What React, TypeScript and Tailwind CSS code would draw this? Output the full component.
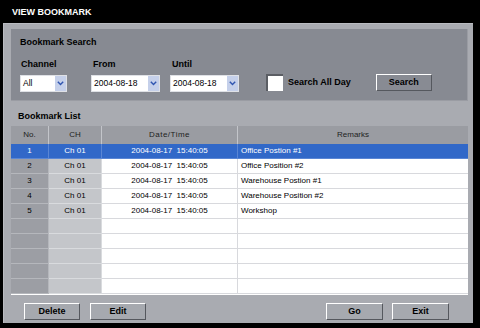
import React from "react";

const rows = [
  { no: "1", ch: "Ch 01", dt: "2004-08-17  15:40:05", rm: "Office Postion #1" },
  { no: "2", ch: "Ch 01", dt: "2004-08-17  15:40:05", rm: "Office Position #2" },
  { no: "3", ch: "Ch 01", dt: "2004-08-17  15:40:05", rm: "Warehouse Postion #1" },
  { no: "4", ch: "Ch 01", dt: "2004-08-17  15:40:05", rm: "Warehouse Position #2" },
  { no: "5", ch: "Ch 01", dt: "2004-08-17  15:40:05", rm: "Workshop" },
];

const empty = Array.from({ length: 5 });

function Select({ value, width }: { value: string; width: string }) {
  return (
    <div className={`${width} h-[17px] bg-white border border-[#dfe1e6] flex items-center justify-between`}>
      <span className="pl-[2px] text-[8.5px] text-black leading-none">{value}</span>
      <span className="w-[11px] h-[15px] bg-[#c5d0ea] flex items-center justify-center">
        <svg width="7" height="5" viewBox="0 0 7 5">
          <path d="M0.8 0.8 L3.5 3.6 L6.2 0.8" fill="none" stroke="#2f55b0" strokeWidth="1.4" />
        </svg>
      </span>
    </div>
  );
}

function RaisedButton({ label, width, fill }: { label: string; width: string; fill: string }) {
  return (
    <button
      className={`${width} h-[17px] ${fill} border-t border-l border-t-white border-l-white border-b border-r border-b-[#55585e] border-r-[#55585e] text-[9px] font-bold text-black leading-none flex items-center justify-center`}
    >
      {label}
    </button>
  );
}

export default function App() {
  return (
    <div className="w-[480px] h-[328px] bg-black overflow-hidden font-['Liberation_Sans',Arial,sans-serif]">
      <div className="h-[23px] pl-[12px] pt-[2px] flex items-center text-white text-[9px] font-bold">
        VIEW BOOKMARK
      </div>

      <div className="ml-[3px] w-[470px] h-[300px] bg-[#a9abb1] border-t border-l border-[#b9bbc0] pl-[7px] pt-[5px] flex flex-col">
        {/* search box */}
        <div className="w-[457px] h-[72px] bg-[#878a92] border-r border-b border-[#9a9ca3] pl-[9px] pt-[8px] flex flex-col">
          <div className="h-[12px] flex items-center text-[9px] font-bold text-black">Bookmark Search</div>
          <div className="mt-[10px] flex items-end">
            <div className="flex flex-col w-[47px]">
              <span className="h-[12px] pl-[1px] flex items-center text-[9px] font-bold text-black">Channel</span>
              <div className="mt-[4px]">
                <Select value="All" width="w-[47px]" />
              </div>
            </div>
            <div className="flex flex-col ml-[24px]">
              <span className="h-[12px] pl-[2px] flex items-center text-[9px] font-bold text-black">From</span>
              <div className="mt-[4px]">
                <Select value="2004-08-18" width="w-[69px]" />
              </div>
            </div>
            <div className="flex flex-col ml-[10px]">
              <span className="h-[12px] pl-[2px] flex items-center text-[9px] font-bold text-black">Until</span>
              <div className="mt-[4px]">
                <Select value="2004-08-18" width="w-[69px]" />
              </div>
            </div>
            <div className="ml-[27px] mb-[1px] flex items-center">
              <span className="w-[17px] h-[17px] bg-white border-t-2 border-l-2 border-[#5b5e64]" />
              <span className="ml-[5px] text-[9px] font-bold text-black">Search All Day</span>
            </div>
            <div className="ml-[25px] mb-[1px]">
              <RaisedButton label="Search" width="w-[56px]" fill="bg-[#888b93]" />
            </div>
          </div>
        </div>

        <div className="h-[12px] mt-[10px] pl-[7px] flex items-center text-[9px] font-bold text-black">Bookmark List</div>

        {/* table */}
        <div className="mt-[3px] w-[457px] flex flex-col text-[8px] leading-none">
          <div className="grid grid-cols-[38px_53px_136px_230px] h-[18px] bg-[#9a9ca2] text-[#1e1e1e]">
            <div className="border-r border-[#c3c5ca] flex items-center justify-center">No.</div>
            <div className="border-r border-[#c3c5ca] flex items-center justify-center">CH</div>
            <div className="border-r border-[#c3c5ca] flex items-center justify-center tracking-[0.5px]">Date/Time</div>
            <div className="flex items-center justify-center">Remarks</div>
          </div>
          {rows.map((r, i) => {
            const sel = i === 0;
            return (
              <div
                key={r.no}
                className={`grid grid-cols-[38px_53px_136px_230px] h-[15px] ${sel ? "bg-[#3168c8] text-white" : "text-black"}`}
              >
                <div className={`flex items-center justify-center border-r border-b ${sel ? "border-[#5a86d4]" : "bg-[#9c9ea4] border-[#b5b7bc]"}`}>{r.no}</div>
                <div className={`flex items-center justify-center border-r border-b ${sel ? "border-[#5a86d4]" : "bg-[#c4c6ca] border-[#d9dbde]"}`}>{r.ch}</div>
                <div className={`flex items-center justify-center whitespace-pre border-r border-b ${sel ? "border-[#5a86d4]" : "bg-white border-[#d8d9dd]"}`}>{r.dt}</div>
                <div className={`flex items-center pl-[3px] border-b ${sel ? "border-[#5a86d4]" : "bg-white border-[#d8d9dd]"}`}>{r.rm}</div>
              </div>
            );
          })}
          {empty.map((_, i) => (
            <div key={i} className="grid grid-cols-[38px_53px_136px_230px] h-[15px]">
              <div className="bg-[#9c9ea4] border-r border-b border-[#b5b7bc]" />
              <div className="bg-[#c4c6ca] border-r border-b border-[#d9dbde]" />
              <div className="bg-white border-r border-b border-[#d8d9dd]" />
              <div className="bg-white border-b border-[#d8d9dd]" />
            </div>
          ))}
          <div className="h-[1px] bg-white" />
        </div>

        {/* bottom buttons */}
        <div className="mt-[8px] pl-[13px] pr-[24px] flex items-center">
          <RaisedButton label="Delete" width="w-[56px]" fill="bg-[#a6a9af]" />
          <div className="ml-[10px]">
            <RaisedButton label="Edit" width="w-[56px]" fill="bg-[#a6a9af]" />
          </div>
          <div className="ml-auto flex gap-[9px]">
            <RaisedButton label="Go" width="w-[57px]" fill="bg-[#a6a9af]" />
            <RaisedButton label="Exit" width="w-[57px]" fill="bg-[#a6a9af]" />
          </div>
        </div>
      </div>
    </div>
  );
}
